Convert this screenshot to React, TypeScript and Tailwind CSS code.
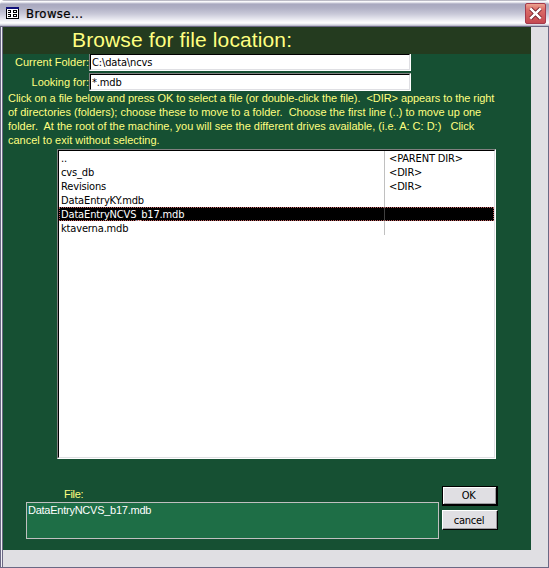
import React from "react";

const ui = "font-['DejaVu_Sans_Condensed','DejaVu_Sans',sans-serif] font-stretch-condensed";

const files = [
  { name: "..", kind: "<PARENT DIR>" },
  { name: "cvs_db", kind: "<DIR>" },
  { name: "Revisions", kind: "<DIR>" },
  { name: "DataEntryKY.mdb", kind: "" },
  { name: "DataEntryNCVS_b17.mdb", kind: "", selected: true },
  { name: "ktaverna.mdb", kind: "" },
];

function FormIcon() {
  return (
    <svg width="13" height="12" viewBox="0 0 13 12" shapeRendering="crispEdges" className="shrink-0">
      <rect width="13" height="12" fill="#000" />
      <rect x="1" y="2" width="11" height="9" fill="#fff" />
      <rect width="13" height="2" fill="#10107a" />
      <path d="M2 3h3v1h-3zM2 5h3v1h-3zM2 7h3v1h-3zM2 9h3v1h-3zM4 4h1v1h-1zM4 8h1v1h-1z" fill="#000" />
      <path d="M7 3h4v3h-4zM7 7h4v3h-4z" fill="#000" />
      <path d="M8 4h2v1h-2zM8 8h2v1h-2z" fill="#fff" />
    </svg>
  );
}

function CloseButton() {
  return (
    <button className="h-[21px] w-[21px] shrink-0">
      <svg width="21" height="21" viewBox="0 0 21 21">
        <defs>
          <linearGradient id="close" x1="0" y1="0" x2="0" y2="1">
            <stop offset="0" stopColor="#eda994" />
            <stop offset=".3" stopColor="#dc6d68" />
            <stop offset="1" stopColor="#c44850" />
          </linearGradient>
        </defs>
        <rect x=".5" y=".5" width="20" height="20" rx="1.5" fill="url(#close)" stroke="#a43a4c" />
        <path d="M5.5 5.5l10 10M15.5 5.5l-10 10" stroke="#6a1a25" strokeWidth="4" />
        <path d="M5.3 5.3l10.4 10.4M15.7 5.3l-10.4 10.4" stroke="#fff" strokeWidth="2.5" />
      </svg>
    </button>
  );
}

function Field({ label, value, first }: { label: string; value: string; first?: boolean }) {
  return (
    <div className={"flex " + (first ? "h-[17px]" : "h-[18px]")}>
      <div className={"w-[86px] shrink-0 whitespace-nowrap text-right text-[11px] leading-4 text-[#ffff80] " + (first ? "" : "pt-px")}>{label}</div>
      <div className={"w-[322px] border border-t-[#808080] border-l-[#808080] border-r-white border-b-white " + (first ? "border-t-0" : "")}>
        <div className={"h-4 border border-t-black border-l-black border-r-[#dfdfe3] border-b-[#dfdfe3] bg-white pl-px text-[11px] leading-4 tracking-[-0.15px] text-black " + ui}>{value}</div>
      </div>
    </div>
  );
}

export default function App() {
  return (
    <div className="flex h-[568px] w-[549px] flex-col overflow-hidden rounded-t-[5px] bg-[#e0dfe3] font-['Liberation_Sans',sans-serif]">
      <header className="flex h-[27px] shrink-0 items-start border-b border-[#6b6884] bg-[linear-gradient(180deg,#77768c_0px,#ffffff_1px,#f4f4f8_2px,#a8a8bf_4px,#b0b0c5_8px,#c9c9d8_14px,#ededf3_20px,#ffffff_23px,#d2d2df_25px,#a9a7b9_26px)] pr-[3px] pl-[6px]">
        <div className="pt-[7px]"><FormIcon /></div>
        <h1 className={"ml-[7px] flex-1 pt-[5px] text-[13px] leading-[18px] tracking-[0.4px] text-black [-webkit-text-stroke:0.2px_black] " + ui}>Browse...</h1>
        <div className="pt-[3px]"><CloseButton /></div>
      </header>
      <div className="flex h-[541px] border-r border-b border-l border-[#6b6884]">
        <div className="w-0.5 shrink-0 border-r border-[#6b6884] bg-[#f0f0f5]" />
        <main className="h-[523px] w-[528px] shrink-0 bg-[#165033]">
          <h2 className="h-[27px] whitespace-nowrap bg-[#243b1f] pl-[69px] text-[21px] leading-[26px] tracking-[0.12px] text-[#ffff80]">Browse for file location:</h2>
          <div className="flex flex-col gap-[2px]">
            <Field label="Current Folder:" value="C:\data\ncvs" first />
            <Field label="Looking for:" value="*.mdb" />
          </div>
          <div className="h-[58px] whitespace-pre pl-[5px] text-[11px] leading-[14px] text-[#ffff80]">
            <div className="tracking-[-0.066px]">Click on a file below and press OK to select a file (or double-click the file).  {"<DIR>"} appears to the right</div>
            <div>of directories (folders); choose these to move to a folder.  Choose the first line (..) to move up one</div>
            <div>{"folder.  At the root of the machine, you will see the different drives available, (i.e. A: C: D:)   Click"}</div>
            <div>cancel to exit without selecting.</div>
          </div>
          <div className="ml-[54px] h-[310px] w-[439px] border border-t-[#808080] border-l-[#808080] border-r-white border-b-white">
            <div className={"h-[308px] border border-t-black border-l-black border-r-[#dfdfe3] border-b-[#dfdfe3] bg-white text-[11px] tracking-[-0.15px] text-black " + ui}>
              {files.map((f) => (
                <div key={f.name} className={"flex h-[14px] leading-4 " + (f.selected ? "bg-black text-white outline-1 -outline-offset-1 outline-dotted outline-[#c06060]" : "")}>
                  <div className="w-[325px] pl-[2px]">{f.name}</div>
                  <div className={"border-l pl-1 " + (f.selected ? "border-[#404040]" : "border-[#c0c0c0]")}>{f.kind}</div>
                </div>
              ))}
            </div>
          </div>
          <div className="mt-[26px] flex">
            <div className="ml-[23px] w-[413px]">
              <div className="h-[17px] pt-px pl-[38px] text-[11px] leading-4 tracking-[-0.3px] text-[#ffff80]">File:</div>
              <div className="h-[37px] border border-[#c0c0c0] bg-[#1e6e46] pl-px text-[11px] leading-[15px] tracking-[-0.25px] text-white">DataEntryNCVS_b17.mdb</div>
            </div>
            <div className={"mt-px ml-[3px] flex flex-col gap-1 text-[11px] tracking-[-0.3px] text-black " + ui}>
              <button className="h-5 w-14 border border-r-2 border-b-2 border-black bg-[#e0dfe3] pr-0.5 leading-[17px] shadow-[inset_1px_1px_white,inset_-1px_-1px_#9d9da1]">OK</button>
              <button className="h-5 w-14 border border-t-white border-l-white border-r-black border-b-black bg-[#e0dfe3] pr-0.5 leading-[19px] shadow-[inset_-1px_-1px_#9d9da1]">cancel</button>
            </div>
          </div>
        </main>
      </div>
    </div>
  );
}
